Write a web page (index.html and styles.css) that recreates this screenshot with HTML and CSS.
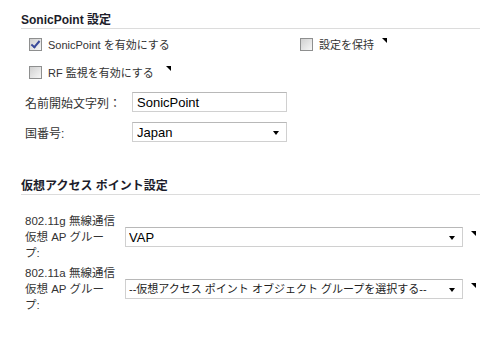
FILE: index.html
```html
<!DOCTYPE html>
<html lang="ja">
<head>
    <meta charset="UTF-8">
    <meta name="viewport" content="width=device-width, initial-scale=1.0">
    <title>SonicPoint 設定</title>
    <link rel="stylesheet" href="styles.css">
</head>
<body>
    <div class="page">
        <h2 class="group-title">SonicPoint 設定</h2>

        <div class="checks">
            <div class="check-row">
                <label class="check"><span class="box checked"></span>SonicPoint を有効にする</label>
                <label class="check"><span class="box"></span>設定を保持<span class="mark"></span></label>
            </div>
            <div class="check-row">
                <label class="check"><span class="box"></span>RF 監視を有効にする<span class="mark far"></span></label>
            </div>
        </div>

        <div class="fields">
            <div class="field">
                <label class="field-label" for="prefix">名前開始文字列：</label>
                <input class="text-input" type="text" id="prefix" value="SonicPoint">
            </div>
            <div class="field">
                <label class="field-label" for="country">国番号:</label>
                <span class="select small">
                    <select id="country">
                        <option>Japan</option>
                    </select>
                </span>
            </div>
        </div>

        <h2 class="group-title second">仮想アクセス ポイント設定</h2>

        <div class="vap-list">
            <div class="vap-row">
                <label class="vap-label" for="vapG">802.11g 無線通信<br>仮想 AP グルー<br>プ:</label>
                <div class="select-wrap">
                    <span class="select wide">
                        <select id="vapG">
                            <option>VAP</option>
                        </select>
                    </span>
                    <span class="mark"></span>
                </div>
            </div>
            <div class="vap-row">
                <label class="vap-label" for="vapA">802.11a 無線通信<br>仮想 AP グルー<br>プ:</label>
                <div class="select-wrap">
                    <span class="select wide">
                        <select id="vapA" class="placeholder">
                            <option>--仮想アクセス ポイント オブジェクト グループを選択する--</option>
                        </select>
                    </span>
                    <span class="mark"></span>
                </div>
            </div>
        </div>
    </div>
</body>
</html>
```

FILE: styles.css
```css
body {
    margin: 0;
    background: #fff;
    font-family: "Liberation Sans", Arial, "Noto Sans CJK JP", sans-serif;
    font-size: 11px;
    color: #333;
}
.page {
    padding: 13px 17px 0 21px;
}
.group-title {
    margin: 0;
    font-size: 12px;
    line-height: 15px;
    font-weight: bold;
    color: #1d1d2b;
    border-bottom: 1px solid #dcdcdc;
}
.group-title.second {
    margin-top: 36px;
}
.checks {
    padding: 4px 0 0 8px;
}
.check-row {
    display: grid;
    grid-template-columns: 271px auto;
    height: 22px;
    align-items: center;
    margin-bottom: 6px;
}
.check {
    display: flex;
    align-items: center;
    white-space: nowrap;
}
.box {
    width: 11px;
    height: 11px;
    border: 1px solid #8e8f8f;
    background: linear-gradient(135deg, #d0d0d0, #f6f6f6);
    margin-right: 6px;
    position: relative;
}
.box.checked::after {
    content: "";
    position: absolute;
    left: 3px;
    top: 0;
    width: 3px;
    height: 7px;
    border: solid #3a4a9a;
    border-width: 0 2px 2px 0;
    transform: rotate(40deg);
}
.mark {
    width: 0;
    height: 0;
    border-top: 5px solid #000;
    border-left: 5px solid transparent;
}
.check .mark {
    align-self: flex-start;
    margin: 2px 0 0 8px;
}
.check .mark.far {
    margin-left: 12px;
}
.fields {
    padding: 2px 0 0 4px;
}
.field {
    display: flex;
    align-items: center;
    height: 22px;
    margin-bottom: 8px;
}
.field-label {
    width: 107px;
    font-size: 12px;
}
.text-input,
.select select {
    box-sizing: border-box;
    height: 20px;
    border: 1px solid #d0d0d0;
    border-top-color: #b8b8b8;
    font-family: "Liberation Sans", Arial, "Noto Sans CJK JP", sans-serif;
    font-size: 13px;
    color: #000;
    padding: 0 4px;
    outline: none;
    background: #fff;
}
.text-input {
    width: 155px;
}
.select {
    position: relative;
    display: inline-block;
}
.select select {
    appearance: none;
    -webkit-appearance: none;
    width: 100%;
    border-radius: 0;
    padding-right: 18px;
}
.select::after {
    content: "";
    position: absolute;
    right: 8px;
    top: 9px;
    border-top: 4px solid #000;
    border-left: 3.5px solid transparent;
    border-right: 3.5px solid transparent;
}
.select.small {
    width: 155px;
}
.select.wide {
    width: 338px;
}
.select.wide select {
    padding-left: 3px;
}
.select select.placeholder {
    font-size: 11px;
    color: #222;
}
.vap-list {
    padding: 18px 0 0 4px;
}
.vap-row {
    display: flex;
    align-items: center;
    margin-bottom: 4px;
}
.vap-label {
    width: 100px;
    line-height: 16px;
    font-size: 11.5px;
}
.select-wrap {
    display: flex;
    align-items: flex-start;
}
.select-wrap .mark {
    margin: 4px 0 0 8px;
}
```
